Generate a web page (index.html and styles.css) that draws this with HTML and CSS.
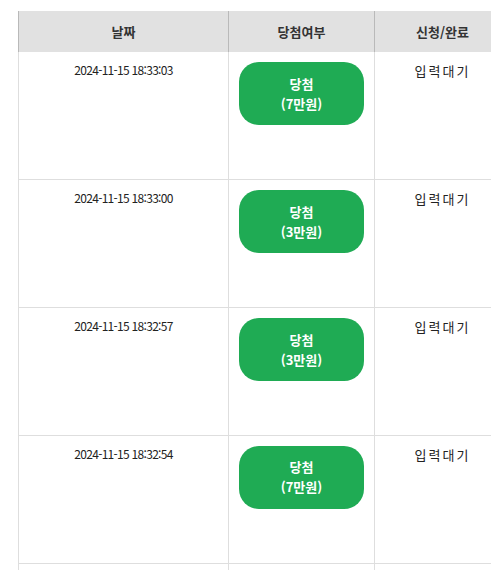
FILE: index.html
```html
<!DOCTYPE html>
<html lang="ko">
<head>
<meta charset="utf-8">
<link rel="stylesheet" href="styles.css">
</head>
<body>
<div class="wrap">
<table class="list">
  <colgroup><col class="c1"><col class="c2"><col class="c3"></colgroup>
  <thead>
    <tr><th>날짜</th><th>당첨여부</th><th>신청/완료</th></tr>
  </thead>
  <tbody>
    <tr><td class="date">2024-11-15 18:33:03</td><td class="win"><div class="badge"><span>당첨</span><span>(7만원)</span></div></td><td class="state">입력대기</td></tr>
    <tr><td class="date">2024-11-15 18:33:00</td><td class="win"><div class="badge"><span>당첨</span><span>(3만원)</span></div></td><td class="state">입력대기</td></tr>
    <tr><td class="date">2024-11-15 18:32:57</td><td class="win"><div class="badge"><span>당첨</span><span>(3만원)</span></div></td><td class="state">입력대기</td></tr>
    <tr><td class="date">2024-11-15 18:32:54</td><td class="win"><div class="badge"><span>당첨</span><span>(7만원)</span></div></td><td class="state">입력대기</td></tr>
    <tr><td class="date"></td><td class="win"></td><td class="state"></td></tr>
  </tbody>
</table>
</div>
</body>
</html>
```
FILE: styles.css
```css
html, body {
  margin: 0;
  padding: 0;
  background: #fff;
  overflow: hidden;
}
body {
  font-family: "Noto Sans CJK KR", "Noto Sans", sans-serif;
  color: #222;
}
.wrap {
  padding: 11px 0 0 18px;
}
.list {
  border-collapse: collapse;
  table-layout: fixed;
  width: 492px;
}
.c1 { width: 210px; }
.c2 { width: 146px; }
.c3 { width: 136px; }
.list th {
  height: 41px;
  padding: 0;
  background: #e1e1e1;
  border-left: 1px solid #b9b9b9;
  border-right: 1px solid #b9b9b9;
  font-size: 13px;
  font-weight: 700;
  color: #333;
  text-align: center;
  vertical-align: middle;
}
.list td {
  height: 127.75px;
  box-sizing: border-box;
  border: 1px solid #dedede;
  padding: 8px 10px 0;
  vertical-align: top;
  text-align: center;
}
.list tbody tr:first-child td {
  border-top: none;
}
.date {
  font-size: 12px;
  line-height: 20px;
  color: #222;
  letter-spacing: -0.7px;
}
.win {
  padding-top: 10px !important;
}
.badge {
  display: flex;
  flex-direction: column;
  align-items: center;
  justify-content: center;
  height: 63px;
  border-radius: 20px;
  background: #1fab54;
  color: #fff;
  font-size: 13px;
  font-weight: 700;
  line-height: 20px;
}
.state {
  font-size: 13px;
  line-height: 22px;
  letter-spacing: 2px;
  color: #222;
  font-weight: 400;
  padding-top: 8px !important;
}
```
